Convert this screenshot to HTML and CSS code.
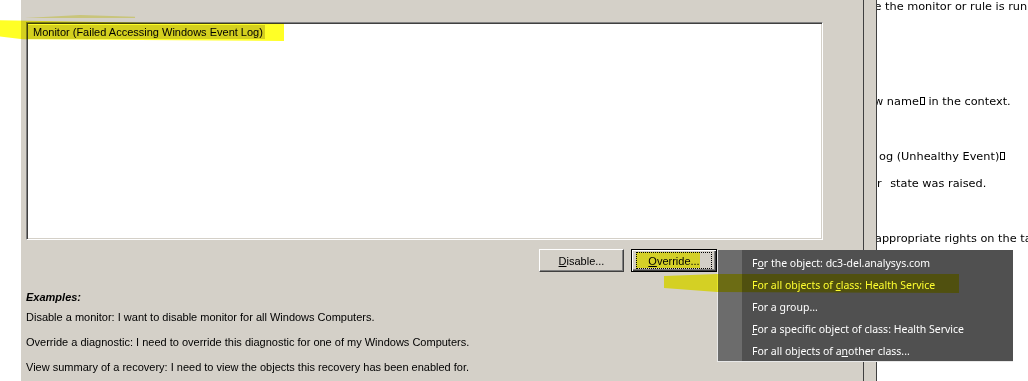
FILE: index.html
```html
<!DOCTYPE html>
<html>
<head>
<meta charset="utf-8">
<link rel="stylesheet" href="styles.css">
</head>
<body>
<div class="screen">
  <section class="dialog">
    <div class="listbox">
      <div class="item">Monitor (Failed Accessing Windows Event Log)</div>
    </div>
    <div class="actions">
      <button class="btn"><u>D</u>isable...</button>
      <button class="btn default"><span class="focus"><u>O</u>verride...</span></button>
    </div>
    <div class="examples">
      <p class="ex-title">Examples:</p>
      <p>Disable a monitor: I want to disable monitor for all Windows Computers.</p>
      <p>Override a diagnostic: I need to override this diagnostic for one of my Windows Computers.</p>
      <p>View summary of a recovery: I need to view the objects this recovery has been enabled for.</p>
    </div>
  </section>
  <div class="splitter"></div>
  <section class="help">
    <p class="l1"><span class="cut c1">e the monitor or rule is running.</span></p>
    <p class="l2"><span class="cut c2">w name<span class="box"></span> in the context.</span></p>
    <p class="l3"><span class="cut c3">og (Unhealthy Event)<span class="box"></span></span></p>
    <p class="l4"><span class="cut c4">or<span class="gap"></span> state was raised.</span></p>
    <p class="l5"><span class="cut c5">appropriate rights on the target.</span></p>
  </section>

  <ul class="menu">
    <li>F<u>o</u>r the object: dc3-del.analysys.com</li>
    <li>For all objects of <u>c</u>lass: Health Service</li>
    <li>For a <u>g</u>roup...</li>
    <li><u>F</u>or a specific object of class: Health Service</li>
    <li>For all objects of a<u>n</u>other class...</li>
  </ul>

  <div class="marker m1"></div>
  <div class="marker m1b"></div>
  <div class="marker m2"></div>
  <div class="marker m3"></div>
</div>
</body>
</html>
```

FILE: styles.css
```css
html, body {
  margin: 0;
  padding: 0;
  background: #ffffff;
}
.screen {
  position: relative;
  width: 1028px;
  height: 381px;
  overflow: hidden;
  display: flex;
  background: #ffffff;
}
.dialog {
  margin-left: 21px;
  width: 842px;
  height: 381px;
  background: #d4d0c8;
  font-family: "Liberation Sans", Arial, sans-serif;
  font-size: 11px;
  color: #000;
  box-sizing: border-box;
  padding-top: 22px;
}
.listbox {
  margin-left: 5px;
  width: 797px;
  height: 218px;
  box-sizing: border-box;
  background: #ffffff;
  border-top: 1px solid #808080;
  border-left: 1px solid #808080;
  border-right: 1px solid #ffffff;
  border-bottom: 1px solid #ffffff;
  box-shadow: inset 1px 1px 0 #404040, inset -1px -1px 0 #d4d0c8;
  padding: 2px 0 0 1px;
}
.item {
  display: inline-block;
  background: #d4d0c8;
  line-height: 14px;
  padding: 0 2px 0 5px;
}
.actions {
  display: flex;
  gap: 7px;
  margin-top: 9px;
  padding-left: 518px;
}
.btn {
  width: 85px;
  height: 23px;
  box-sizing: border-box;
  background: #d4d0c8;
  font-family: "Liberation Sans", Arial, sans-serif;
  font-size: 11px;
  color: #000;
  border: 1px solid;
  border-color: #ffffff #404040 #404040 #ffffff;
  box-shadow: inset -1px -1px 0 #808080;
  padding: 0;
  display: flex;
  align-items: center;
  justify-content: center;
}
.btn.default {
  width: 86px;
  border: 1px solid #000;
  box-shadow: inset 1px 1px 0 #ffffff, inset -1px -1px 0 #404040, inset -2px -2px 0 #808080;
}
.focus {
  display: flex;
  align-items: center;
  justify-content: center;
  width: 74px;
  height: 15px;
  border: 1px dotted #000;
}
.examples {
  margin-top: 18px;
  padding-left: 5px;
}
.examples p {
  margin: 0 0 11px 0;
  line-height: 14px;
}
.examples p.ex-title {
  font-weight: bold;
  font-style: italic;
  margin-bottom: 6px;
}
.splitter {
  width: 12px;
  height: 381px;
  background: #d4d0c8;
  border-left: 1px solid #404040;
  border-right: 1px solid #404040;
}
.help {
  flex: 1;
  overflow: hidden;
  background: #ffffff;
  font-family: "DejaVu Sans", Verdana, sans-serif;
  font-size: 11.3px;
  color: #000;
  white-space: nowrap;
}
.help p {
  margin: 0;
  line-height: 14px;
}
.help .l2 { margin-top: 81px; }
.help .l3 { margin-top: 41px; }
.help .l4 { margin-top: 13px; }
.help .l5 { margin-top: 41px; }
.cut { display: inline-block; }
.c1 { margin-left: -2.5px; }
.c2 { margin-left: -3px; }
.c3 { margin-left: 2px; }
.c4 { margin-left: -7px; }
.c5 { margin-left: -2px; }
.gap {
  display: inline-block;
  width: 5px;
}
.box {
  display: inline-block;
  width: 3px;
  height: 6px;
  border: 1px solid #000;
  margin-left: 1px;
  vertical-align: 0;
}
.menu {
  position: absolute;
  left: 717px;
  top: 250px;
  width: 296px;
  height: 112px;
  box-sizing: border-box;
  margin: 0;
  padding: 2px 0 0 0;
  list-style: none;
  background: linear-gradient(to right, #6c6c6c 0, #6c6c6c 24px, #505050 24px);
  border-left: 1px solid #e8e8e8;
  border-bottom: 1px solid #e8e8e8;
  font-family: "Noto Sans", "Open Sans", sans-serif;
  font-size: 10.5px;
  color: #ffffff;
}
.menu li {
  height: 22px;
  line-height: 22px;
  padding-left: 34px;
  white-space: nowrap;
}
.marker {
  position: absolute;
  background: rgba(255, 255, 0, 0.85);
  mix-blend-mode: multiply;
  pointer-events: none;
}
.m1 {
  left: 0;
  top: 19px;
  width: 284px;
  height: 22px;
  clip-path: polygon(0 6%, 30% 12%, 60% 18%, 100% 20%, 100% 100%, 8% 92%, 0 80%);
}
.m1b {
  left: 25px;
  top: 15px;
  width: 110px;
  height: 3px;
  background: rgba(230, 230, 60, 0.5);
  clip-path: polygon(0 100%, 50% 0, 100% 60%, 100% 100%);
}
.m2 {
  left: 664px;
  top: 273px;
  width: 295px;
  height: 20px;
  background: rgba(255, 255, 0, 0.82);
  clip-path: polygon(0 15%, 18% 5%, 100% 5%, 100% 100%, 18% 95%, 0 75%);
}
.m3 {
  left: 636px;
  top: 252px;
  width: 64px;
  height: 16px;
  background: rgba(255, 255, 0, 0.8);
}
```
